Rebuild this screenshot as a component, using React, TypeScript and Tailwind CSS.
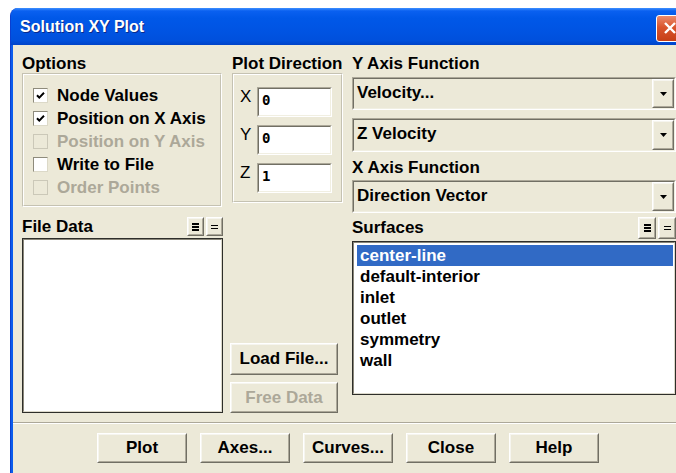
import clsx from 'clsx';
import type { ReactNode } from 'react';

type BoxProps = { className?: string; children?: ReactNode };

// classic 3D raised bevel used for push buttons
const Raised = ({ className, children }: BoxProps) => (
  <div
    className={clsx(
      'border border-t-white border-l-white border-r-[#716f64] border-b-[#716f64] bg-[#ece9d8]',
      className,
    )}
  >
    <div className="flex h-full items-center justify-center border border-t-[#f6f5ef] border-l-[#f6f5ef] border-r-[#aca899] border-b-[#aca899]">
      {children}
    </div>
  </div>
);

// sunken bevel for text fields and combo boxes
const Sunken = ({ className, children }: BoxProps) => (
  <div
    className={clsx(
      'border border-t-[#aca899] border-l-[#aca899] border-r-white border-b-white',
      className,
    )}
  >
    <div className="flex h-full border border-t-[#716f64] border-l-[#716f64] border-r-[#f1efe2] border-b-[#f1efe2]">
      {children}
    </div>
  </div>
);

// etched frame around a group of controls
const Etched = ({ className, children }: BoxProps) => (
  <div
    className={clsx(
      'border border-t-[#c5c2b2] border-l-[#c5c2b2] border-r-white border-b-white',
      className,
    )}
  >
    <div className="h-full border border-t-white border-l-white border-r-[#c5c2b2] border-b-[#c5c2b2]">
      {children}
    </div>
  </div>
);

const ListBox = ({ className, children }: BoxProps) => (
  <div className={clsx('border border-[#2e2e2a] bg-white', className)}>
    <div className="h-full border border-t-[#8a877a] border-l-[#8a877a] border-r-[#dcd9cb] border-b-[#dcd9cb]">
      {children}
    </div>
  </div>
);

const CheckBox = ({ label, checked, disabled }: { label: string; checked?: boolean; disabled?: boolean }) => (
  <div className="flex h-[23px] items-center gap-[9px]">
    <span
      className={clsx(
        'flex size-[15px] items-center justify-center border',
        disabled
          ? 'border-[#cbc8b8] bg-[#ece9d8]'
          : 'border-t-[#8e8b7c] border-l-[#8e8b7c] border-r-[#dcd9c8] border-b-[#dcd9c8] bg-white',
      )}
    >
      {checked ? (
        <svg width="11" height="11" viewBox="0 0 11 11">
          <path d="M2 5.2 L4.3 7.6 L9 2.8" fill="none" stroke="#000" strokeWidth="2" />
        </svg>
      ) : null}
    </span>
    <span className={disabled ? 'text-[#aca899]' : 'text-black'}>{label}</span>
  </div>
);

const AxisField = ({ axis, value }: { axis: string; value: string }) => (
  <div className="flex items-start">
    <span className="w-[17px] text-[17px] font-normal leading-[20px]">{axis}</span>
    <Sunken className="h-[30px] w-[75px] bg-white">
      <span className="pl-[3px] pt-[3px] font-['DejaVu_Sans_Mono',monospace] text-[14px] leading-[16px] font-bold">
        {value}
      </span>
    </Sunken>
  </div>
);

const DownArrow = () => (
  <svg width="7" height="4" viewBox="0 0 7 4">
    <path d="M0 0 H7 L3.5 4 Z" fill="#000" />
  </svg>
);

const Combo = ({ value, className }: { value: string; className?: string }) => (
  <Sunken className={clsx('bg-[#ece9d8]', className)}>
    <span className="flex-1 pl-[3px] pt-[4px] leading-[20px]">{value}</span>
    <Raised className="w-[22px]">
      <DownArrow />
    </Raised>
  </Sunken>
);

// the two little list-mode toggles above each list
const ListToggles = ({ size }: { size: string }) => (
  <div className="flex gap-[2px]">
    <Raised className={size}>
      <div className="flex flex-col gap-[1px]">
        <span className="block h-[2px] w-[7px] bg-black" />
        <span className="block h-[2px] w-[7px] bg-black" />
        <span className="block h-[2px] w-[7px] bg-black" />
      </div>
    </Raised>
    <Raised className={size}>
      <div className="flex flex-col gap-[2px]">
        <span className="block h-px w-[7px] bg-black" />
        <span className="block h-px w-[7px] bg-black" />
      </div>
    </Raised>
  </div>
);

const surfaces = ['center-line', 'default-interior', 'inlet', 'outlet', 'symmetry', 'wall'];
const actions = ['Plot', 'Axes...', 'Curves...', 'Close', 'Help'];

const App = () => {
  return (
    <div className="h-[473px] w-[676px] overflow-hidden bg-white font-['Liberation_Sans',Arial,sans-serif] text-[17px] font-bold text-black">
      <div className="ml-[10px] mt-[8px] w-[680px] overflow-hidden rounded-t-[8px] border-l border-l-[#0a3fd0] bg-[#0b5cec]">
        <div className="flex h-[37px] items-center justify-between bg-[linear-gradient(to_bottom,#3d8fff_0px,#0a60f0_3px,#0058e8_10px,#0054e3_60%,#0050dc_88%,#0043c8_100%)] pl-[9px] pr-[7px]">
          <span className="text-[16px] text-white [text-shadow:1px_1px_0_#0a2a8a]">Solution XY Plot</span>
          <div className="mt-[3px] flex size-[27px] items-center justify-center rounded-[3px] border border-white bg-[linear-gradient(to_bottom,#eb8a6c,#d9552d_45%,#c63f17)]">
            <svg width="14" height="14" viewBox="0 0 14 14">
              <path d="M2 2 L12 12 M12 2 L2 12" stroke="#fff" strokeWidth="2.4" />
            </svg>
          </div>
        </div>

        <div className="ml-[2px] mr-[3px] bg-[#ece9d8] pl-[9px] pt-[10px] pb-[12px]">
          <div className="flex">
            <div className="w-[200px]">
              <div className="h-[18px] leading-[18px]">Options</div>
              <Etched className="h-[134px]">
                <div className="pl-[9px] pt-[9px]">
                  <CheckBox label="Node Values" checked />
                  <CheckBox label="Position on X Axis" checked />
                  <CheckBox label="Position on Y Axis" disabled />
                  <CheckBox label="Write to File" />
                  <CheckBox label="Order Points" disabled />
                </div>
              </Etched>
            </div>

            <div className="ml-[10px] w-[111px]">
              <div className="h-[18px] whitespace-nowrap leading-[18px]">Plot Direction</div>
              <Etched className="h-[130px]">
                <div className="flex flex-col gap-[8px] pl-[6px] pt-[12px]">
                  <AxisField axis="X" value="0" />
                  <AxisField axis="Y" value="0" />
                  <AxisField axis="Z" value="1" />
                </div>
              </Etched>
            </div>

            <div className="ml-[9px] w-[324px]">
              <div className="h-[18px] leading-[18px]">Y Axis Function</div>
              <Combo value="Velocity..." className="mt-[4px] h-[33px]" />
              <Combo value="Z Velocity" className="mt-[8px] h-[34px]" />
              <div className="mt-[7px] h-[18px] leading-[18px]">X Axis Function</div>
              <Combo value="Direction Vector" className="mt-[3px] h-[33px]" />
            </div>
          </div>

          <div className="mt-[4px] flex">
            <div className="w-[201px]">
              <div className="flex h-[21px] items-start justify-between">
                <span className="pt-[1px] leading-[18px]">File Data</span>
                <ListToggles size="h-[19px] w-[17px]" />
              </div>
              <ListBox className="h-[175px]" />
            </div>

            <div className="ml-[7px] flex w-[108px] flex-col justify-end gap-[7px]">
              <Raised className="h-[32px]">Load File...</Raised>
              <Raised className="h-[31px]">
                <span className="text-[#aca899]">Free Data</span>
              </Raised>
            </div>

            <div className="ml-[14px] w-[324px]">
              <div className="flex h-[24px] items-start justify-between">
                <span className="pt-[2px] leading-[18px]">Surfaces</span>
                <ListToggles size="h-[22px] w-[18px]" />
              </div>
              <ListBox className="h-[154px]">
                <div className="pl-[3px] pr-px pt-[2px]">
                  {surfaces.map((name, i) => (
                    <div
                      key={name}
                      className={clsx(
                        'h-[21px] pl-[3px] leading-[21px]',
                        i === 0 ? 'bg-[#316ac5] text-white' : 'text-black',
                      )}
                    >
                      {name}
                    </div>
                  ))}
                </div>
              </ListBox>
            </div>
          </div>

          <div className="-ml-[9px] mt-[9px] border-t border-b border-t-[#aca899] border-b-white" />

          <div className="mt-[9px] flex gap-[13px] pl-[75px]">
            {actions.map((label) => (
              <Raised key={label} className="h-[30px] w-[90px]">
                {label}
              </Raised>
            ))}
          </div>
        </div>
      </div>
    </div>
  );
};

export default App;
